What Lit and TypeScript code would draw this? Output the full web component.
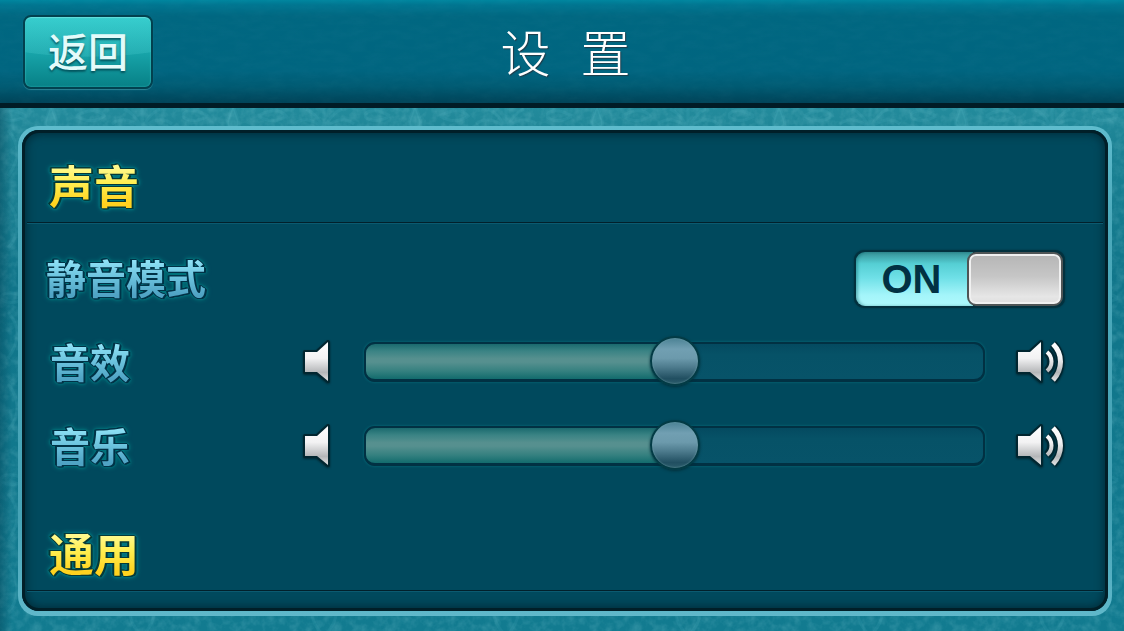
import { LitElement, html, css, svg } from "lit";
import { customElement, property, state } from "lit/decorators.js";

const texture = (base: string, seed: number, strength: number) =>
  `url("data:image/svg+xml,${encodeURIComponent(
    `<svg xmlns='http://www.w3.org/2000/svg' width='300' height='300'><filter id='n' x='0' y='0' width='100%' height='100%'><feTurbulence type='fractalNoise' baseFrequency='${base}' numOctaves='3' seed='${seed}' stitchTiles='stitch'/><feColorMatrix values='0 0 0 0 0.4  0 0 0 0 0.8  0 0 0 0 0.85  ${strength} 0 0 0 ${-strength * 0.38}'/></filter><rect width='300' height='300' filter='url(#n)'/></svg>`
  )}")`;

const damask = `url("data:image/svg+xml,${encodeURIComponent(
  `<svg xmlns='http://www.w3.org/2000/svg' width='182' height='182' fill='none' stroke='#7fd6de' stroke-opacity='.08' stroke-width='3'><path fill='#7fd6de' fill-opacity='.12' d='M51 128C40 126 48 118 51 104C54 118 62 126 51 128Z'/><path d='M142 128C132 120 122 116 112 124M142 128C152 120 162 116 172 124M142 128C136 118 132 112 124 109M142 128C148 118 152 112 160 109M142 128V107M76 116C86 110 98 108 104 116C96 122 86 122 76 116M26 116C16 110 4 108 0 116C6 122 16 122 26 116M142 90C122 70 130 56 142 40C154 56 162 70 142 90M51 70C31 50 39 36 51 20C63 36 71 50 51 70M8 20C20 34 20 54 8 66M8 130C20 144 20 160 8 176'/></svg>`
)}")`;

@customElement("speaker-icon")
export class SpeakerIcon extends LitElement {
  @property({ type: Boolean }) loud = false;

  static styles = css`
    :host {
      display: block;
      flex: none;
    }
    svg {
      display: block;
      overflow: visible;
    }
    .edge {
      fill: none;
      stroke: #012630;
      stroke-linejoin: round;
      filter: drop-shadow(0 1px 1px #012630);
    }
    .wave {
      fill: none;
      stroke: url(#metal);
    }
  `;

  render() {
    const cone = "M3 13H15L26 3V42L15 33H3Z";
    const inner = "M32 13C38 18 38 27 32 32";
    const outer = "M38 5C48 15 48 30 38 41";
    return html`<svg width=${this.loud ? 50 : 28} height="48" aria-hidden="true">
      <defs>
        <linearGradient id="metal" gradientUnits="userSpaceOnUse" x1="0" y1="3" x2="0" y2="42">
          <stop offset="0" stop-color="#ffffff" />
          <stop offset=".42" stop-color="#f2f2f3" />
          <stop offset=".78" stop-color="#b4b6b8" />
          <stop offset="1" stop-color="#e2e3e4" />
        </linearGradient>
      </defs>
      <path class="edge" stroke-width="4" d=${cone} />
      ${this.loud
        ? svg`<path class="edge" stroke-width="8" d=${inner} />
            <path class="edge" stroke-width="8" d=${outer} />`
        : ""}
      <path fill="url(#metal)" d=${cone} />
      ${this.loud
        ? svg`<path class="wave" stroke-width="4" d=${inner} />
            <path class="wave" stroke-width="5" d=${outer} />`
        : ""}
    </svg>`;
  }
}

@customElement("app-root")
export class AppRoot extends LitElement {
  @state() private muted = true;
  @state() private effects = 50;
  @state() private music = 50;

  static styles = css`
    :host {
      display: block;
      --cjk: "Noto Sans CJK SC", sans-serif;
      font-family: var(--cjk);
    }
    * {
      box-sizing: border-box;
    }
    .page {
      display: flex;
      flex-direction: column;
      min-height: 100vh;
      background: linear-gradient(90deg, rgba(0, 60, 80, 0.4), transparent 12px),
        var(--damask), var(--grain),
        linear-gradient(#238b9c 107px, #1b8193 150px, #10758a 45%, #127b90);
    }
    .bar {
      display: grid;
      grid-template-columns: 1fr auto 1fr;
      align-items: center;
      padding: 0 24px 0 23px;
      height: 108px;
      border-bottom: 5px solid #011c26;
      background: var(--leather),
        linear-gradient(#00869f, #007590 5px, #006781 16px, #006580 68%, #005a72 84%, #004358);
    }
    .back {
      justify-self: start;
      width: 130px;
      height: 74px;
      padding: 0 0 4px;
      border: 2px solid #02414f;
      border-radius: 8px;
      color: #e3fbfa;
      font: 500 40px/62px var(--cjk);
      text-shadow: 0 2px 2px rgba(0, 70, 80, 0.8);
      cursor: pointer;
      background: radial-gradient(ellipse 110% 40px at 50% 0, rgba(120, 240, 240, 0.15) 98%, transparent 100%),
        linear-gradient(#2cc8c8, #18a5aa 50%, #078086);
      box-shadow: inset 0 1px 1px #64e0de, inset 0 0 2px #35b9bb, 0 1px 1px #2d8495;
    }
    .title {
      margin: 0;
      padding: 14px 0 0 8px;
      color: #fff;
      font: 300 50px/88px "Liberation Mono", var(--cjk);
      text-shadow: 1px 1px 1px rgba(40, 50, 60, 0.8);
    }
    .panel {
      flex: 1;
      margin: 18px 12px 15px 18px;
      padding: 4px;
      border-radius: 20px;
      background: linear-gradient(#5fbccd, #4ba9bb 20%, #46a3b6 80%, #60b8ca);
    }
    .well {
      height: 100%;
      padding: 22px 5px 20px;
      border-radius: 17px;
      background: #00495d;
      box-shadow: inset 0 0 0 3px #011f28, inset 0 0 10px 4px #012b38;
    }
    .heading {
      margin: 0;
      padding: 0 0 4px 22px;
      border-bottom: 1px solid #01202b;
      box-shadow: 0 1px 0 #0b5a70;
      font: 700 45px/66px var(--cjk);
    }
    .glyphs {
      display: inline-block;
      color: transparent;
      background-clip: text;
      -webkit-background-clip: text;
    }
    .gold {
      background-image: linear-gradient(#fff98c 24%, #ffee4e 48%, #ffd21f 78%);
      filter: drop-shadow(1px 1px 0 #053a38) drop-shadow(-1px -1px 0 #053a38)
        drop-shadow(1px 0 0 #053a38) drop-shadow(-1px 0 0 #053a38)
        drop-shadow(0 0 1px #007c84) drop-shadow(0 0 2px #008087);
    }
    .ice {
      background-image: linear-gradient(#8de0f5 24%, #6cc3de 50%, #4fa3c4 80%);
      filter: drop-shadow(1px 1px 0 #003347) drop-shadow(-1px -1px 0 #003347)
        drop-shadow(1px 0 0 #003347) drop-shadow(-1px 0 0 #003347)
        drop-shadow(0 0 1px #00757e) drop-shadow(0 0 2px #007a80);
    }
    .rows {
      padding: 14px 38px 31px 19px;
    }
    .row {
      display: flex;
      align-items: center;
      height: 84px;
    }
    .name {
      flex: none;
      width: 256px;
      padding-bottom: 4px;
      font: 700 40px/60px var(--cjk);
    }
    .name.inset {
      padding-left: 4px;
    }
    .switch {
      position: relative;
      display: flex;
      width: 211px;
      height: 58px;
      margin-left: auto;
      padding: 2px;
      border-radius: 10px;
      background: #02313e;
      box-shadow: 0 0 2px #02313e;
      cursor: pointer;
    }
    .switch input {
      position: absolute;
      inset: 0;
      width: 100%;
      height: 100%;
      margin: 0;
      opacity: 0;
      cursor: pointer;
    }
    .state {
      flex: 1;
      margin-right: -6px;
      padding-right: 6px;
      border-radius: 9px 0 0 9px;
      color: #013143;
      text-align: center;
      font: 700 40px/54px "Liberation Sans", sans-serif;
      background: linear-gradient(#358f94, #55cfd4 22%, #6fe0e7 48%, #a4f5fa 80%, #aef9fc);
      box-shadow: inset 2px 0 3px rgba(0, 90, 100, 0.4);
    }
    .knob {
      width: 96px;
      border: 2px solid #4f5556;
      border-radius: 9px;
      background: linear-gradient(#b5b5b5, #c6c6c6 45%, #e6e6e6 85%, #dedede);
      box-shadow: inset 0 0 0 2px #f0f0f0;
    }
    .switch.off {
      flex-direction: row-reverse;
    }
    .switch.off .state {
      margin: 0 0 0 -6px;
      border-radius: 0 9px 9px 0;
    }
    .switch input:focus-visible ~ .knob {
      outline: 2px solid #fff;
    }
    .range {
      flex: 1;
      min-width: 0;
      height: 52px;
      margin: 0 30px 2px 34px;
      appearance: none;
      -webkit-appearance: none;
      background: none;
      cursor: pointer;
    }
    .range::-webkit-slider-runnable-track {
      height: 40px;
      border: solid #013143;
      border-width: 2px 2px 3px;
      border-radius: 11px;
      background: linear-gradient(#1a6a6e, #3a8384 20%, #56908f 42%, #56908f 52%, #34807f 78%, #126b6d)
          0 0 / var(--fill) 100% no-repeat,
        linear-gradient(#044a60, #065267 30%, #075369);
      box-shadow: 0 0 2px 1px #045c6c;
    }
    .range::-webkit-slider-thumb {
      appearance: none;
      -webkit-appearance: none;
      width: 50px;
      height: 50px;
      margin-top: -8px;
      border: 2px solid #033b45;
      border-radius: 50%;
      background: linear-gradient(#4b8294, #719fb2 24%, #6c9aac 44%, #4c7a8c 64%, #214f61 88%, #2b5c6a);
      box-shadow: inset 0 0 2px #76a5ad, 0 1px 3px #022f3a;
    }
  `;

  private slider(id: string, name: string, value: number, set: (v: number) => void) {
    return html`<div class="row">
      <label class="name inset" for=${id}><span class="glyphs ice">${name}</span></label>
      <speaker-icon></speaker-icon>
      <input
        class="range"
        id=${id}
        type="range"
        min="0"
        max="100"
        .value=${String(value)}
        style="--fill: ${value}%"
        @input=${(e: Event) => set(Number((e.target as HTMLInputElement).value))}
      />
      <speaker-icon loud></speaker-icon>
    </div>`;
  }

  render() {
    return html`<div class="page">
      <header class="bar">
        <button class="back" type="button">返回</button>
        <h1 class="title">设 置</h1>
      </header>
      <main class="panel">
        <div class="well">
          <h2 class="heading"><span class="glyphs gold">声音</span></h2>
          <div class="rows">
            <div class="row">
              <label class="name" for="mute"><span class="glyphs ice">静音模式</span></label>
              <label class="switch ${this.muted ? "" : "off"}">
                <input
                  id="mute"
                  type="checkbox"
                  role="switch"
                  .checked=${this.muted}
                  @change=${(e: Event) => (this.muted = (e.target as HTMLInputElement).checked)}
                />
                <span class="state">${this.muted ? "ON" : "OFF"}</span>
                <span class="knob"></span>
              </label>
            </div>
            ${this.slider("effects", "音效", this.effects, (v) => (this.effects = v))}
            ${this.slider("music", "音乐", this.music, (v) => (this.music = v))}
          </div>
          <h2 class="heading"><span class="glyphs gold">通用</span></h2>
        </div>
      </main>
    </div>`;
  }

  connectedCallback() {
    super.connectedCallback();
    this.style.setProperty("--grain", texture("0.12", 4, 0.35));
    this.style.setProperty("--leather", texture("0.06 0.16", 9, 0.05));
    this.style.setProperty("--damask", damask);
  }
}
